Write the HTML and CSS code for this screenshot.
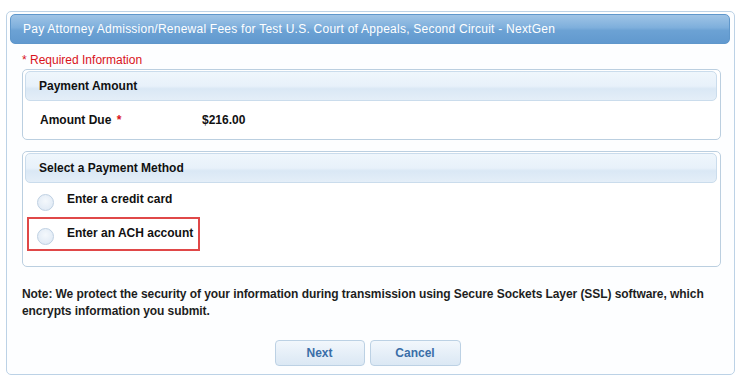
FILE: index.html
```html
<!DOCTYPE html>
<html>
<head>
<meta charset="utf-8">
<link rel="stylesheet" href="styles.css">
</head>
<body>
<div class="panel">
  <div class="panel-title">Pay Attorney Admission/Renewal Fees for Test U.S. Court of Appeals, Second Circuit - NextGen</div>
  <div class="content">
    <div class="required">* Required Information</div>
    <div class="box box-amount">
      <div class="box-head">Payment Amount</div>
      <div class="amount-row">
        <span class="label">Amount Due <span class="star">*</span></span>
        <span class="value">$216.00</span>
      </div>
    </div>
    <div class="box box-method">
      <div class="box-head">Select a Payment Method</div>
      <div class="option opt-card">
        <span class="radio"></span><span class="opt-text">Enter a credit card</span>
      </div>
      <div class="option opt-ach">
        <span class="radio"></span><span class="opt-text">Enter an ACH account</span>
      </div>
    </div>
    <p class="note">Note: We protect the security of your information during transmission using Secure Sockets Layer (SSL) software, which encrypts information you submit.</p>
    <div class="buttons">
      <button class="btn btn-next">Next</button>
      <button class="btn btn-cancel">Cancel</button>
    </div>
  </div>
</div>
</body>
</html>
```

FILE: styles.css
```css
html, body {
  margin: 0;
  padding: 0;
  background: #ffffff;
}
body {
  font-family: "Liberation Sans", Arial, sans-serif;
  font-size: 12px;
  color: #1e1e1e;
}
.panel {
  margin: 11px 0 0 6px;
  width: 729px;
  height: 364px;
  box-sizing: border-box;
  border: 1px solid #bcd2e6;
  border-radius: 5px;
  background: #fdfeff;
}
.panel-title {
  margin: 2px 4px 0 3px;
  height: 30px;
  box-sizing: border-box;
  border: 1px solid #5f97cb;
  border-radius: 5px;
  background: linear-gradient(to bottom, #9fc4e6 0%, #7eafdc 45%, #6ca2d4 55%, #6199cf 100%);
  color: #ffffff;
  padding-left: 12px;
  line-height: 28px;
  font-size: 12px;
  letter-spacing: 0.24px;
}
.content {
  padding: 0 13px 0 15px;
}
.required {
  margin-top: 9px;
  color: #d9131b;
  line-height: 14px;
  height: 14px;
}
.box {
  margin-top: 2px;
  height: 71px;
  box-sizing: border-box;
  border: 1px solid #bbcfe0;
  border-radius: 5px;
  background: #ffffff;
}
.box-method {
  margin-top: 11px;
  height: 116px;
}
.box-head {
  margin: 1px 3px 0 2px;
  height: 30px;
  box-sizing: border-box;
  border: 1px solid #cadcec;
  border-radius: 5px;
  background: linear-gradient(to bottom, #eff6fc 0%, #e8f1fa 50%, #dae8f5 60%, #e4eef8 100%);
  padding-left: 13px;
  line-height: 28px;
  font-weight: bold;
  color: #111111;
}
.amount-row {
  display: flex;
  margin-top: 12px;
  padding-left: 17px;
  line-height: 14px;
  font-weight: bold;
  color: #111111;
}
.amount-row .label {
  width: 162px;
}
.star {
  color: #d9131b;
  margin-left: 2px;
}
.option {
  display: flex;
  align-items: center;
  font-weight: bold;
  color: #111111;
}
.opt-card {
  margin-top: 3px;
  height: 28px;
  margin-left: 14px;
}
.opt-ach {
  margin-top: 3px;
  margin-left: 4px;
  width: 173px;
  height: 34px;
  box-sizing: border-box;
  border: 2px solid #e04848;
  padding-left: 8px;
}
.radio {
  width: 17px;
  height: 17px;
  box-sizing: border-box;
  border-radius: 50%;
  border: 1px solid #bed0e2;
  background: radial-gradient(circle at 50% 40%, #f4f8fc 0%, #e3ecf6 70%, #d7e4f2 100%);
  margin-right: 13px;
  flex: none;
}
.opt-card .radio {
  margin-top: 4px;
}
.opt-ach .radio {
  margin-top: 4px;
}
.opt-text {
  margin-top: -2px;
}
.note {
  margin: 19px 0 0 0;
  line-height: 17px;
  font-weight: bold;
  color: #1e1e1e;
  letter-spacing: -0.07px;
}
.buttons {
  display: flex;
  justify-content: center;
  gap: 5px;
  margin-top: 20px;
  padding-right: 8px;
}
.btn {
  height: 26px;
  box-sizing: border-box;
  border: 1px solid #bcd1e4;
  border-radius: 4px;
  background: linear-gradient(to bottom, #f2f7fc 0%, #e6eff8 50%, #dbe8f4 100%);
  color: #3a6ea8;
  font-family: "Liberation Sans", Arial, sans-serif;
  font-size: 12px;
  font-weight: bold;
  padding: 0;
}
.btn-next {
  width: 90px;
}
.btn-cancel {
  width: 91px;
}
```
